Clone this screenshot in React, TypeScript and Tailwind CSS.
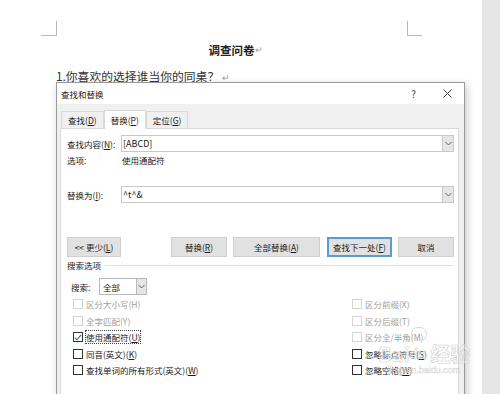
import React from "react";

const cjk = "font-['Noto_Sans_CJK_SC','Noto_Sans',sans-serif]";

function Chevron() {
  return (
    <svg width="7" height="5" viewBox="0 0 7 5" className="block">
      <polyline points="0.5,1 3.5,4 6.5,1" fill="none" stroke="#606060" strokeWidth="1" />
    </svg>
  );
}

function Key({ k }: { k: string }) {
  return (
    <>
      (<span className="underline underline-offset-1">{k}</span>)
    </>
  );
}

function Tab({ label, k, active }: { label: string; k: string; active?: boolean }) {
  return (
    <div
      className={
        active
          ? "h-[19px] px-[6px] flex items-center bg-white border border-b-0 border-[#d9d9d9] -mb-px relative z-10 text-[#1a1a1a]"
          : "h-[17px] px-[6px] flex items-center bg-[#f0f0f0] border border-b-0 border-[#d9d9d9] text-[#1a1a1a]"
      }
    >
      {label}
      <Key k={k} />
    </div>
  );
}

function ComboInput({ value }: { value: string }) {
  return (
    <div className="flex-1 h-[17px] flex border border-[#c8c8c8] bg-white">
      <div className="flex-1 flex items-center pl-[1px] text-[9px] text-[#1a1a1a]">{value}</div>
      <div className="w-[11px] flex items-center justify-center bg-[#e6e6e6] border-l border-[#c8c8c8]">
        <Chevron />
      </div>
    </div>
  );
}

function Btn({ children, w, primary }: { children: React.ReactNode; w: string; primary?: boolean }) {
  return (
    <div
      className={`${w} h-[20px] flex items-center justify-center bg-[#e1e1e1] text-[#1a1a1a] ${
        primary ? "border-2 border-[#5b9bd5]" : "border border-[#cfcfcf]"
      }`}
    >
      {children}
    </div>
  );
}

function Check({
  label,
  disabled,
  checked,
  focus,
}: {
  label: React.ReactNode;
  disabled?: boolean;
  checked?: boolean;
  focus?: boolean;
}) {
  return (
    <div className="h-[16.5px] flex items-center gap-[3px]">
      <div
        className={`w-[10px] h-[10px] flex items-center justify-center bg-white border ${
          disabled ? "border-[#d4d4d4]" : "border-[#333333]"
        }`}
      >
        {checked && (
          <svg width="8" height="7" viewBox="0 0 8 7">
            <polyline points="0.8,3.6 3,5.8 7.2,0.8" fill="none" stroke="#2e6db4" strokeWidth="1.1" />
          </svg>
        )}
      </div>
      <span
        className={`${disabled ? "text-[#a0a0a0]" : "text-[#1a1a1a]"} ${
          focus ? "outline outline-1 outline-dotted outline-[#444]" : ""
        }`}
      >
        {label}
      </span>
    </div>
  );
}

export default function App() {
  return (
    <div className={`w-[500px] h-[394px] flex overflow-hidden bg-white ${cjk}`}>
      {/* Document page */}
      <div className="relative flex-1">
        {/* page corner marks */}
        <div className="absolute left-[41px] top-[21px] w-[16px] h-[15px] border-r border-b border-[#b8b8b8]" />
        <div className="absolute left-[407px] top-[21px] w-[15px] h-[15px] border-l border-b border-[#b8b8b8]" />

        <div className="ml-[56px] w-[351px] pt-[42px]">
          <div className="text-center text-[11.5px] leading-[16px] font-bold text-[#222]">
            <span className="relative">
              调查问卷
              <span className="absolute left-full top-0 font-normal text-[#9a9a9a] text-[9px]">↵</span>
            </span>
          </div>
          <div className="mt-[10px] text-[11.8px] leading-[16px] text-[#333]">
            1.你喜欢的选择谁当你的同桌？ <span className="text-[#9a9a9a] text-[9px]">↵</span>
          </div>
        </div>

        {/* Find & Replace dialog */}
        <div className="absolute left-[56px] top-[82px] w-[409px] h-[330px] bg-[#f0f0f0] border border-[#9a9a9a] shadow-[2px_3px_8px_rgba(0,0,0,0.22)] text-[8.5px] leading-[12px]">
          {/* title bar */}
          <div className="h-[21px] bg-white flex items-center pl-[4px] pr-[12px] text-[#1a1a1a]">
            <span className="flex-1">查找和替换</span>
            <span className="text-[10px] text-[#444] mr-[27px]">?</span>
            <svg width="9" height="9" viewBox="0 0 9 9">
              <path d="M0.5 0.5 L8.5 8.5 M8.5 0.5 L0.5 8.5" stroke="#444" strokeWidth="1" />
            </svg>
          </div>

          {/* tabs */}
          <div className="h-[24px] flex items-end pl-[4px]">
            <Tab label="查找" k="D" />
            <Tab label="替换" k="P" active />
            <Tab label="定位" k="G" />
          </div>

          {/* tab panel */}
          <div className="ml-[3px] mr-[5px] h-[290px] bg-white border border-[#d9d9d9] pl-[6px] pr-[4px] pt-[6px] text-[#1a1a1a]">
            <div className="flex items-center">
              <div className="w-[54px]">
                查找内容<Key k="N" />:
              </div>
              <ComboInput value="[ABCD]" />
            </div>
            <div className="flex items-center mt-[2px] h-[12px]">
              <div className="w-[55px]">选项:</div>
              <div>使用通配符</div>
            </div>

            <div className="flex items-center mt-[20px]">
              <div className="w-[54px]">
                替换为<Key k="I" />:
              </div>
              <ComboInput value="^t^&" />
            </div>

            {/* buttons */}
            <div className="flex mt-[34px]">
              <Btn w="w-[54px]">
                &lt;&lt; 更少<Key k="L" />
              </Btn>
              <div className="ml-[50px]">
                <Btn w="w-[56px]">
                  替换<Key k="R" />
                </Btn>
              </div>
              <div className="ml-[6px]">
                <Btn w="w-[87px]">
                  全部替换<Key k="A" />
                </Btn>
              </div>
              <div className="ml-[7px]">
                <Btn w="w-[65px]" primary>
                  查找下一处<Key k="F" />
                </Btn>
              </div>
              <div className="ml-[6px]">
                <Btn w="w-[56px]">取消</Btn>
              </div>
            </div>

            {/* search options */}
            <div className="flex items-center mt-[2px] h-[12px]">
              <span>搜索选项</span>
              <div className="flex-1 ml-[4px] border-t border-[#e0e0e0]" />
            </div>

            <div className="flex items-center mt-[7px] pl-[4px]">
              <span className="w-[28px]">搜索:</span>
              <div className="w-[48px] h-[17px] flex border border-[#b9b9b9] bg-white">
                <div className="flex-1 flex items-center pl-[3px]">全部</div>
                <div className="w-[10px] flex items-center justify-center bg-[#e6e6e6] border-l border-[#b9b9b9]">
                  <Chevron />
                </div>
              </div>
            </div>

            <div className="grid grid-cols-[279px_1fr] pl-[6px] mt-[1px]">
              <Check label="区分大小写(H)" disabled />
              <Check label="区分前缀(X)" disabled />
              <Check label="全字匹配(Y)" disabled />
              <Check label="区分后缀(T)" disabled />
              <Check
                label={
                  <>
                    使用通配符<Key k="U" />
                  </>
                }
                checked
                focus
              />
              <Check label="区分全/半角(M)" disabled />
              <Check
                label={
                  <>
                    同音(英文)<Key k="K" />
                  </>
                }
              />
              <Check
                label={
                  <>
                    忽略标点符号<Key k="S" />
                  </>
                }
              />
              <Check
                label={
                  <>
                    查找单词的所有形式(英文)<Key k="W" />
                  </>
                }
              />
              <Check
                label={
                  <>
                    忽略空格<Key k="W" />
                  </>
                }
              />
            </div>
          </div>
        </div>

        {/* watermark */}
        <div className="absolute left-[378px] top-[343px] flex flex-col items-center pointer-events-none">
          <div className="flex items-end text-[20px] leading-[22px] font-bold text-white/40 [-webkit-text-stroke:0.6px_#d0d0d0]">
            <span>Bai</span>
            <span className="relative text-[13px]">
              <span className="absolute left-[1px] -top-[16px] w-[16px] h-[14px] rounded-full border border-[#d8d8d8]" />
              du
            </span>
            <span className="ml-[4px]">经验</span>
          </div>
          <div className="text-[9px] leading-[10px] text-white/40 [-webkit-text-stroke:0.4px_#d0d0d0] font-['Liberation_Sans',sans-serif]">
            jingyan.baidu.com
          </div>
        </div>
      </div>

      {/* right gray area */}
      <div className="w-[18px] h-full bg-[#e6e6e6]" />
    </div>
  );
}
